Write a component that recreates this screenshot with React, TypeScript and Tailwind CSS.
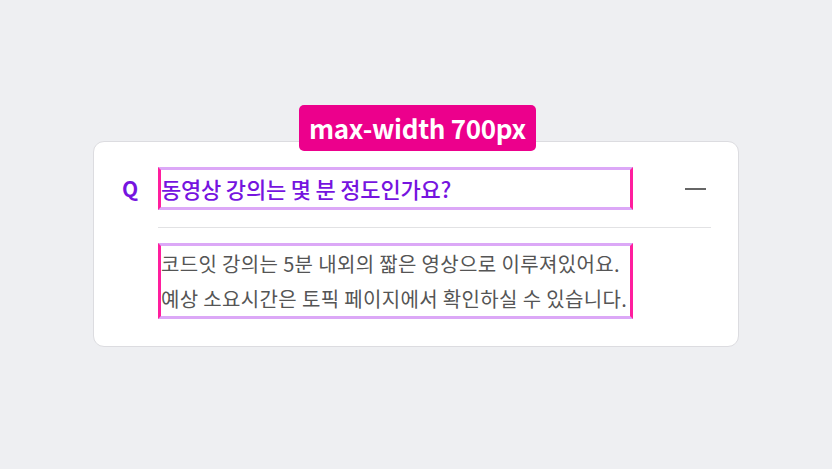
export default function App() {
  return (
    <main className="flex h-[469px] w-full justify-center bg-[#eeeff2] pt-[141px] font-['Noto_Sans_CJK_KR','Noto_Sans',sans-serif]">
      <section className="relative h-[206px] w-[646px] rounded-[11px] border border-[#dcdce0] bg-white pl-[28px] pr-[27px] pt-[25px]">
        <div className="absolute left-[205px] top-[-37px] flex h-[46px] items-center rounded-[5px] bg-[#ec008c] px-[10px] text-[26px] font-bold leading-none tracking-[-0.3px] text-white">
          max-width 700px
        </div>

        <div className="flex items-center">
          <span className="w-[36px] text-[21px] font-bold leading-none text-[#7614df]">Q</span>
          <div className="flex h-[43px] w-[475px] items-center border-x-[3px] border-y-[3px] border-x-[#ff1e9e] border-y-[#dca8f7] text-[22px] font-medium tracking-[-0.2px] text-[#7614df]">
            동영상 강의는 몇 분 정도인가요?
          </div>
          <div className="ml-auto mr-[5px] h-[2px] w-[21px] bg-[#666666]" />
        </div>

        <div className="ml-[36px] mt-[17px] h-px bg-[#e2e2e4]" />

        <div className="ml-[36px] mt-[15px] w-[475px] border-x-[3px] border-y-[3px] border-x-[#ff1e9e] border-y-[#dca8f7] text-[20px] leading-[35px] tracking-[0.35px] text-[#555555]">
          <p>코드잇 강의는 5분 내외의 짧은 영상으로 이루져있어요.</p>
          <p>예상 소요시간은 토픽 페이지에서 확인하실 수 있습니다.</p>
        </div>
      </section>
    </main>
  );
}
